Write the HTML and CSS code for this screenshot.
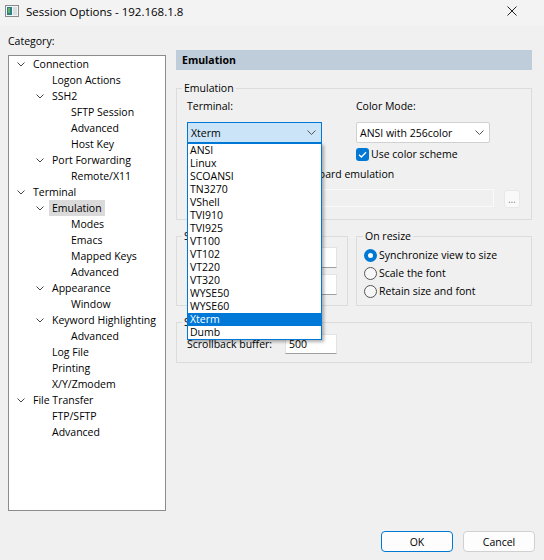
FILE: index.html
```html
<!DOCTYPE html>
<html lang="en">
<head>
    <meta charset="UTF-8">
    <title>Session Options - 192.168.1.8</title>
    <link rel="stylesheet" href="styles.css">
</head>
<body>
    <div class="window">
        <div class="titlebar">
            <svg class="title-icon" width="14" height="12" viewBox="0 0 14 12">
                <rect x="0.5" y="0.5" width="13" height="11" fill="#f4f4f4" stroke="#8a8a8a"/>
                <rect x="2" y="2" width="5" height="8" fill="#2f7f86"/>
                <rect x="3" y="3" width="2" height="5" fill="#63b36a"/>
                <rect x="8" y="2" width="4" height="8" fill="#d8dde2"/>
            </svg>
            <span class="title-text">Session Options - 192.168.1.8</span>
            <svg class="close" width="10" height="10" viewBox="0 0 10 10">
                <path d="M0.5 0.5 L9.5 9.5 M9.5 0.5 L0.5 9.5" stroke="#222" stroke-width="1"/>
            </svg>
        </div>

        <div class="main">
            <div class="category">
                <div class="cat-label">Category:</div>
                <ul class="tree">
                    <li class="lvl-0 open"><i></i>Connection</li>
                    <li class="lvl-1"><i></i>Logon Actions</li>
                    <li class="lvl-1 open"><i></i>SSH2</li>
                    <li class="lvl-2"><i></i>SFTP Session</li>
                    <li class="lvl-2"><i></i>Advanced</li>
                    <li class="lvl-2"><i></i>Host Key</li>
                    <li class="lvl-1 open"><i></i>Port Forwarding</li>
                    <li class="lvl-2"><i></i>Remote/X11</li>
                    <li class="lvl-0 open"><i></i>Terminal</li>
                    <li class="lvl-1 open"><i></i><span class="selected">Emulation</span></li>
                    <li class="lvl-2"><i></i>Modes</li>
                    <li class="lvl-2"><i></i>Emacs</li>
                    <li class="lvl-2"><i></i>Mapped Keys</li>
                    <li class="lvl-2"><i></i>Advanced</li>
                    <li class="lvl-1 open"><i></i>Appearance</li>
                    <li class="lvl-2"><i></i>Window</li>
                    <li class="lvl-1 open"><i></i>Keyword Highlighting</li>
                    <li class="lvl-2"><i></i>Advanced</li>
                    <li class="lvl-1"><i></i>Log File</li>
                    <li class="lvl-1"><i></i>Printing</li>
                    <li class="lvl-1"><i></i>X/Y/Zmodem</li>
                    <li class="lvl-0 open"><i></i>File Transfer</li>
                    <li class="lvl-1"><i></i>FTP/SFTP</li>
                    <li class="lvl-1"><i></i>Advanced</li>
                </ul>
            </div>

            <div class="panel">
                <div class="panel-head">Emulation</div>

                <fieldset class="group emulation">
                    <legend>Emulation</legend>
                    <div class="emu-grid">
                        <div class="field-label">Terminal:</div>
                        <div class="field-label">Color Mode:</div>

                        <div class="combo-wrap">
                            <div class="combo active">
                                <span>Xterm</span>
                                <svg width="9" height="5" viewBox="0 0 9 5"><polyline points="0.5,0.5 4.5,4.5 8.5,0.5" fill="none" stroke="#555"/></svg>
                            </div>
                            <ul class="dropdown">
                                <li>ANSI</li>
                                <li>Linux</li>
                                <li>SCOANSI</li>
                                <li>TN3270</li>
                                <li>VShell</li>
                                <li>TVI910</li>
                                <li>TVI925</li>
                                <li>VT100</li>
                                <li>VT102</li>
                                <li>VT220</li>
                                <li>VT320</li>
                                <li>WYSE50</li>
                                <li>WYSE60</li>
                                <li class="current">Xterm</li>
                                <li>Dumb</li>
                            </ul>
                        </div>
                        <div class="combo">
                            <span>ANSI with 256color</span>
                            <svg width="9" height="5" viewBox="0 0 9 5"><polyline points="0.5,0.5 4.5,4.5 8.5,0.5" fill="none" stroke="#555"/></svg>
                        </div>

                        <div></div>
                        <label class="check">
                            <span class="box checked">
                                <svg width="13" height="13" viewBox="0 0 13 13"><polyline points="3,6.8 5.4,9 10,4.2" fill="none" stroke="#fff" stroke-width="1.3"/></svg>
                            </span>
                            Use color scheme
                        </label>
                    </div>

                    <label class="check keyboard">
                        <span class="box"></span>
                        Select an alternate keyboard emulation
                    </label>
                    <div class="browse-row">
                        <div class="text-disabled"></div>
                        <button class="dots">…</button>
                    </div>
                </fieldset>

                <div class="group-row">
                    <fieldset class="group size">
                        <legend>Size</legend>
                        <div class="input-row">
                            <span class="row-label">Logical rows:</span>
                            <div class="text-input">24</div>
                        </div>
                        <div class="input-row">
                            <span class="row-label">Logical columns:</span>
                            <div class="text-input">80</div>
                        </div>
                    </fieldset>
                    <fieldset class="group resize">
                        <legend>On resize</legend>
                        <label class="radio"><span class="dot on"></span>Synchronize view to size</label>
                        <label class="radio"><span class="dot"></span>Scale the font</label>
                        <label class="radio"><span class="dot"></span>Retain size and font</label>
                    </fieldset>
                </div>

                <fieldset class="group scrollback">
                    <legend>Scrollback</legend>
                    <div class="input-row">
                        <span class="row-label">Scrollback buffer:</span>
                        <div class="text-input">500</div>
                    </div>
                </fieldset>
            </div>
        </div>

        <div class="footer">
            <button class="btn default">OK</button>
            <button class="btn">Cancel</button>
        </div>
    </div>
</body>
</html>
```

FILE: styles.css
```css
* {
    box-sizing: border-box;
    margin: 0;
    padding: 0;
}

body {
    font-family: "Segoe UI", "Open Sans", "Noto Sans", sans-serif;
    font-size: 10.5px;
    color: #000;
    background-color: #f0f0f0;
}

.window {
    width: 544px;
    height: 560px;
    display: flex;
    flex-direction: column;
}

/* title bar */
.titlebar {
    height: 26px;
    display: flex;
    align-items: center;
    padding: 0 0 4px 5px;
    background-color: #f3f3f3;
}

.title-icon {
    margin-right: 7px;
}

.title-text {
    font-size: 11.5px;
    line-height: 15px;
}

.close {
    margin-left: auto;
    margin-right: 27px;
}

/* body */
.main {
    display: flex;
    gap: 10px;
    padding: 8px 12px 0 8px;
}

.category {
    width: 158px;
}

.cat-label {
    line-height: 15px;
}

.tree {
    list-style: none;
    margin-top: 6px;
    height: 456px;
    background-color: #fff;
    border: 1px solid #8c8c8c;
}

.tree li {
    height: 16px;
    line-height: 16px;
    display: flex;
    align-items: center;
    white-space: nowrap;
}

.tree li i {
    width: 16px;
    height: 16px;
    margin-right: 4px;
    flex-shrink: 0;
}

.tree li.open i {
    background: url("data:image/svg+xml,%3Csvg xmlns='http://www.w3.org/2000/svg' width='16' height='16'%3E%3Cpolyline points='4.5,6.5 8,10 11.5,6.5' fill='none' stroke='%23444'/%3E%3C/svg%3E") no-repeat center;
}

.lvl-0 { padding-left: 4px; }
.lvl-1 { padding-left: 23px; }
.lvl-2 { padding-left: 42px; }

.selected {
    background-color: #dadada;
    padding: 0 3px;
    margin-left: -3px;
}

/* right panel */
.panel {
    width: 356px;
    margin-top: 16px;
}

.panel-head {
    height: 20px;
    line-height: 20px;
    padding-left: 6px;
    font-weight: 700;
    background-color: #bfccda;
}

.group {
    border: 1px solid #dcdcdc;
    padding: 4px 10px 10px;
}

.group legend {
    line-height: 14px;
    padding: 0 2px;
    margin-left: -5px;
}

.emulation {
    margin-top: 11px;
    padding-bottom: 11px;
}

.emu-grid {
    display: grid;
    grid-template-columns: 135px 134px;
    column-gap: 34px;
}

.field-label {
    line-height: 14px;
}

.combo-wrap {
    position: relative;
    margin-top: 9px;
}

.combo {
    height: 21px;
    margin-top: 9px;
    display: flex;
    align-items: center;
    justify-content: space-between;
    padding: 0 5px 0 3px;
    background-color: #fff;
    border: 1px solid #d0d0d0;
    border-radius: 2px;
}

.combo-wrap .combo {
    margin-top: 0;
}

.combo.active {
    background-color: #cce4f7;
    border-color: #0078d7;
    border-radius: 0;
}

.dropdown {
    position: absolute;
    top: 100%;
    left: 0;
    right: 0;
    z-index: 10;
    list-style: none;
    background-color: #fff;
    border: 1px solid #0078d7;
    box-shadow: 2px 2px 3px rgba(0, 0, 0, 0.3);
}

.dropdown li {
    height: 13px;
    line-height: 13px;
    padding-left: 2px;
}

.dropdown li.current {
    background-color: #0078d7;
    color: #fff;
}

.check {
    display: flex;
    align-items: center;
    height: 14px;
    margin-top: 4px;
    line-height: 14px;
}

.box {
    width: 13px;
    height: 13px;
    margin-right: 2px;
    border: 1px solid #333;
    border-radius: 3px;
    background-color: #fff;
}

.box.checked {
    border: none;
    background-color: #0078d4;
}

.box svg {
    display: block;
}

.keyboard {
    margin-top: 6px;
}

.browse-row {
    display: flex;
    align-items: flex-start;
    margin-top: 8px;
    padding-left: 14px;
}

.text-disabled {
    width: 293px;
    height: 18px;
    border: 1px solid #fafafa;
}

.dots {
    width: 16px;
    height: 18px;
    margin: 1px 0 0 10px;
    border: 1px solid #e8e8e8;
    border-radius: 3px;
    background-color: #f9f9f9;
    color: #8a8a8a;
    font-family: inherit;
    font-size: 10px;
}

.group-row {
    display: flex;
    gap: 8px;
    margin-top: 9px;
}

.size {
    width: 172px;
    padding-bottom: 10px;
}

.input-row {
    display: flex;
    align-items: center;
}

.size .input-row + .input-row {
    margin-top: 6px;
}

.row-label {
    width: 98px;
}

.text-input {
    width: 52px;
    height: 21px;
    line-height: 19px;
    padding-left: 3px;
    background-color: #fff;
    border: 1px solid #e3e3e3;
    border-bottom-color: #a0a0a0;
}

.resize {
    flex: 1;
    padding: 3px 10px 5px 7px;
}

.resize legend {
    margin-left: -1px;
}

.radio {
    display: flex;
    align-items: center;
    height: 18px;
}

.dot {
    width: 13px;
    height: 13px;
    margin-right: 2px;
    border: 1px solid #555;
    border-radius: 50%;
    background-color: #f7f7f7;
}

.dot.on {
    border: 4px solid #0078d4;
    background-color: #fff;
}

.scrollback {
    margin-top: 9px;
    padding: 5px 10px 8px;
}

.scrollback .text-input {
    height: 20px;
    line-height: 18px;
}

/* footer */
.footer {
    margin-top: auto;
    display: flex;
    justify-content: flex-end;
    gap: 10px;
    padding: 0 9px 8px;
}

.btn {
    width: 72px;
    height: 21px;
    font-family: inherit;
    font-size: 10.5px;
    color: #000;
    background-color: #fdfdfd;
    border: 1px solid #d0d0d0;
    border-radius: 4px;
}

.btn.default {
    border-color: #0078d4;
}
```
